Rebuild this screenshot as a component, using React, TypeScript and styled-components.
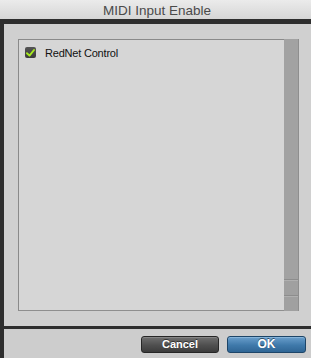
import React from "react";
import styled, { createGlobalStyle } from "styled-components";

const Global = createGlobalStyle`
  html, body { margin: 0; padding: 0; background: #d0d0d0; }
  body { font-family: "Liberation Sans", Arial, sans-serif; }
`;

const Window = styled.div`
  width: 311px;
  height: 358px;
  display: flex;
  flex-direction: column;
  overflow: hidden;
`;

const TitleBar = styled.div`
  height: 19px;
  flex: none;
  display: flex;
  align-items: center;
  justify-content: center;
  background: linear-gradient(#ebebeb, #d6d6d6);
  color: #4a4a4a;
  font-size: 13.5px;
  padding-left: 3px;
  padding-top: 1px;
  box-sizing: border-box;
`;

const Frame = styled.div`
  flex: 1;
  display: flex;
  flex-direction: column;
  gap: 3px;
  background: #2e2e2e;
  padding: 5px 0 0 4px;
  min-height: 0;
`;

const Panel = styled.div`
  flex: 1;
  display: flex;
  background: #d0d0d0;
  padding: 15px 12px 15px 14px;
  min-height: 0;
`;

const ListBox = styled.div`
  flex: 1;
  display: flex;
  border: 1px solid #8a8a8a;
  border-bottom-color: #8f8f8f;
  background: #d6d6d6;
`;

const ListContent = styled.div`
  flex: 1;
  padding: 7px 6px;
`;

const Row = styled.div`
  display: flex;
  align-items: center;
  gap: 9px;
  height: 11px;
  font-size: 11px;
  letter-spacing: -0.2px;
  color: #111;
`;

const Check = styled.div`
  width: 11px;
  height: 11px;
  border-radius: 2px;
  background: linear-gradient(#555, #3c3c3c);
  display: flex;
  align-items: center;
  justify-content: center;
`;

const Scrollbar = styled.div`
  width: 15px;
  display: flex;
  flex-direction: column;
  background: #a2a2a2;
  border-right: 1px solid #8e8e8e;
  margin: -1px -1px -1px 0;
  box-sizing: border-box;
`;

const Track = styled.div`
  flex: 1;
`;

const ScrollButton = styled.div`
  height: 16px;
  box-sizing: border-box;
  border-top: 1px solid #8d8d8d;
  background: #a0a0a0;
  box-shadow: inset 0 1px 0 #b0b0b0;
`;

const Footer = styled.div`
  flex: none;
  height: 29px;
  background: #cdcdcd;
  display: flex;
  justify-content: flex-end;
  align-items: flex-start;
  gap: 8px;
  padding: 7px 5px 0 0;
  box-sizing: border-box;
`;

const Button = styled.button<{ $primary?: boolean; $w: number }>`
  width: ${(p) => p.$w}px;
  height: 17px;
  padding: 0;
  margin: 0;
  border-radius: 3px;
  border: 1px solid ${(p) => (p.$primary ? "#1d4568" : "#262626")};
  background: ${(p) =>
    p.$primary
      ? "linear-gradient(#6a9fcc, #3f79aa 55%, #2f6594)"
      : "linear-gradient(#707070, #4f4f4f 55%, #3c3c3c)"};
  box-shadow: inset 0 1px 0 ${(p) => (p.$primary ? "#86b4da" : "#858585")};
  color: #fff;
  font-family: "Liberation Sans", Arial, sans-serif;
  font-weight: bold;
  font-size: ${(p) => (p.$primary ? "12px" : "11px")};
  text-shadow: 0 -1px 0 rgba(0, 0, 0, 0.5);
  line-height: 15px;
`;

export default function App() {
  return (
    <Window>
      <Global />
      <TitleBar>MIDI Input Enable</TitleBar>
      <Frame>
        <Panel>
          <ListBox>
            <ListContent>
              <Row>
                <Check>
                  <svg width="9" height="8" viewBox="0 0 9 8">
                    <path d="M1 4.2 L3.5 6.6 L8 1" fill="none" stroke="#a6ec1c" strokeWidth="1.9" strokeLinecap="round" strokeLinejoin="round" />
                  </svg>
                </Check>
                <span>RedNet Control</span>
              </Row>
            </ListContent>
            <Scrollbar>
              <Track />
              <ScrollButton />
              <ScrollButton />
            </Scrollbar>
          </ListBox>
        </Panel>
        <Footer>
          <Button $w={78}>Cancel</Button>
          <Button $w={79} $primary>OK</Button>
        </Footer>
      </Frame>
    </Window>
  );
}
